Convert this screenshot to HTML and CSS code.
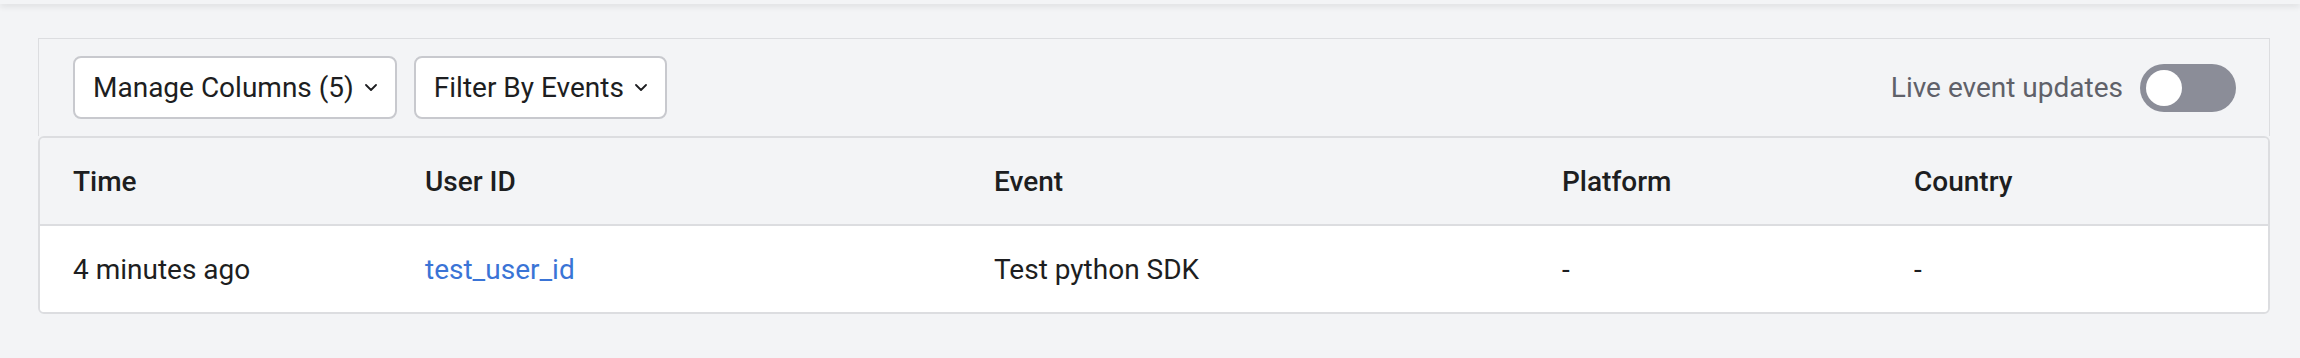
FILE: index.html
```html
<!DOCTYPE html>
<html lang="en">
<head>
    <meta charset="UTF-8">
    <meta name="viewport" content="width=device-width, initial-scale=1.0">
    <title>Events</title>
    <link rel="stylesheet" href="styles.css">
</head>
<body>
    <div class="topbar"></div>
    <main class="page">
        <section class="events">
            <div class="toolbar">
                <div class="toolbar-left">
                    <button class="dropdown" type="button">
                        Manage Columns (5)
                        <svg class="chevron" width="12" height="7" viewBox="0 0 12 7"><path d="M1 1l5 5 5-5" /></svg>
                    </button>
                    <button class="dropdown" type="button">
                        Filter By Events
                        <svg class="chevron" width="12" height="7" viewBox="0 0 12 7"><path d="M1 1l5 5 5-5" /></svg>
                    </button>
                </div>
                <label class="live">
                    <span class="live-label">Live event updates</span>
                    <span class="switch"><span class="knob"></span></span>
                </label>
            </div>

            <table class="events-table">
                <colgroup>
                    <col class="col-time">
                    <col class="col-user">
                    <col class="col-event">
                    <col class="col-platform">
                    <col class="col-country">
                </colgroup>
                <thead>
                    <tr>
                        <th>Time</th>
                        <th>User ID</th>
                        <th>Event</th>
                        <th>Platform</th>
                        <th>Country</th>
                    </tr>
                </thead>
                <tbody>
                    <tr>
                        <td>4 minutes ago</td>
                        <td><a href="#">test_user_id</a></td>
                        <td>Test python SDK</td>
                        <td>-</td>
                        <td>-</td>
                    </tr>
                </tbody>
            </table>
        </section>
    </main>
</body>
</html>
```

FILE: styles.css
```css
body {
    margin: 0;
    background: #f3f4f6;
    color: #1d1e21;
    font-family: Roboto, "Liberation Sans", sans-serif;
    font-size: 28px;
}
.topbar {
    height: 4px;
    background: #f3f4f6;
    box-shadow: 0 2px 6px rgba(0, 0, 0, 0.12);
}
.page {
    padding: 34px 30px 0 38px;
}
.toolbar {
    display: flex;
    justify-content: space-between;
    align-items: center;
    height: 97px;
    padding: 0 33px 0 34px;
    border: 1px solid #dcdde0;
    border-bottom: none;
}
.toolbar-left {
    display: flex;
    gap: 17px;
}
.dropdown {
    display: flex;
    align-items: center;
    gap: 11px;
    height: 63px;
    padding: 0 18px;
    background: #fff;
    border: 2px solid #c8c9ce;
    border-radius: 8px;
    color: #1d1e21;
    font-family: inherit;
    font-size: 28px;
    cursor: pointer;
}
.chevron {
    fill: none;
    stroke: #1d1e21;
    stroke-width: 1.8;
    stroke-linecap: round;
    stroke-linejoin: round;
}
.live {
    display: flex;
    align-items: center;
    gap: 17px;
    color: #5f6169;
}
.switch {
    position: relative;
    width: 96px;
    height: 48px;
    border-radius: 24px;
    background: #8b8d98;
}
.knob {
    position: absolute;
    left: 6px;
    top: 6px;
    width: 36px;
    height: 36px;
    border-radius: 50%;
    background: #fff;
}
.events-table {
    width: 100%;
    table-layout: fixed;
    border-collapse: separate;
    border-spacing: 0;
    border: 2px solid #dcdde0;
    border-radius: 6px;
    overflow: hidden;
}
.col-time { width: 352px; }
.col-user { width: 569px; }
.col-event { width: 568px; }
.col-platform { width: 352px; }
th, td {
    text-align: left;
    padding: 0 0 0 33px;
}
th {
    height: 86px;
    background: #f3f4f6;
    font-weight: 500;
    border-bottom: 2px solid #dcdde0;
}
td {
    height: 86px;
    background: #fff;
    font-weight: 400;
}
td a {
    color: #3a74d6;
    text-decoration: none;
}
```
